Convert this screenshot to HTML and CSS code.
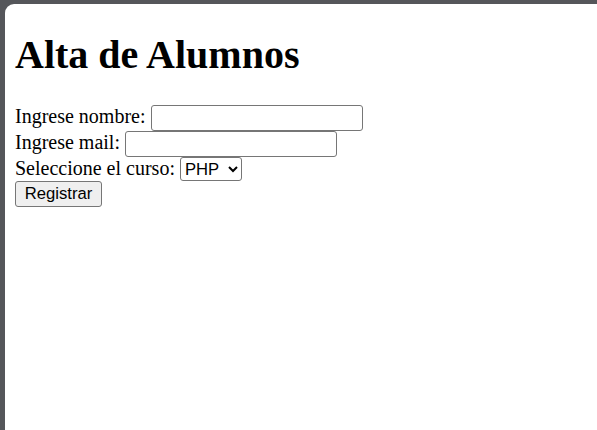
FILE: index.html
```html
<!DOCTYPE html>
<html lang="es">
<head>
<meta charset="utf-8">
<title>Alta de Alumnos</title>
<link rel="stylesheet" href="styles.css">
</head>
<body>
<div class="page">
  <h1 class="title">Alta de Alumnos</h1>
  <form class="form">
    <div class="row">Ingrese nombre: <input class="field field-name" type="text"></div>
    <div class="row">Ingrese mail: <input class="field field-mail" type="text"></div>
    <div class="row">Seleccione el curso: <select class="choice"><option>PHP</option><option>Java</option><option>Python</option></select></div>
    <div class="row"><button class="btn" type="button">Registrar</button></div>
  </form>
</div>
</body>
</html>
```

FILE: styles.css
```css
html, body {
  margin: 0;
  height: 100%;
}
body {
  background: #55565a;
  overflow: hidden;
}
.page {
  display: flow-root;
  box-sizing: border-box;
  margin: 4px 0 0 5px;
  height: calc(100% - 4px);
  padding: 0 10px;
  background: #ffffff;
  border-top-left-radius: 9px;
  font-family: "Liberation Serif", "Times New Roman", serif;
  font-size: 20px;
  color: #000;
}
.title {
  font-size: 40px;
  font-weight: bold;
  margin: 26.8px 0;
}
.form {
  margin: 0;
}
.row {
  line-height: 23px;
}
.field {
  box-sizing: border-box;
  height: 26px;
  padding: 1px 3px;
  border: 1px solid #767676;
  border-radius: 3px;
  font-family: "Liberation Sans", Arial, sans-serif;
  font-size: 16.67px;
  vertical-align: baseline;
  background: #fff;
}
.field-name { width: 212px; }
.field-mail { width: 212px; }
.choice {
  box-sizing: border-box;
  height: 24px;
  width: 62px;
  font-family: "Liberation Sans", Arial, sans-serif;
  font-size: 16.67px;
  border: 1px solid #767676;
  border-radius: 3px;
  background: #fff;
  color: #000;
}
.btn {
  box-sizing: border-box;
  height: 26px;
  width: 87px;
  padding: 1px 7px;
  font-family: "Liberation Sans", Arial, sans-serif;
  font-size: 16.67px;
  border: 1px solid #767676;
  border-radius: 3px;
  background: #efefef;
  color: #000;
}
```
